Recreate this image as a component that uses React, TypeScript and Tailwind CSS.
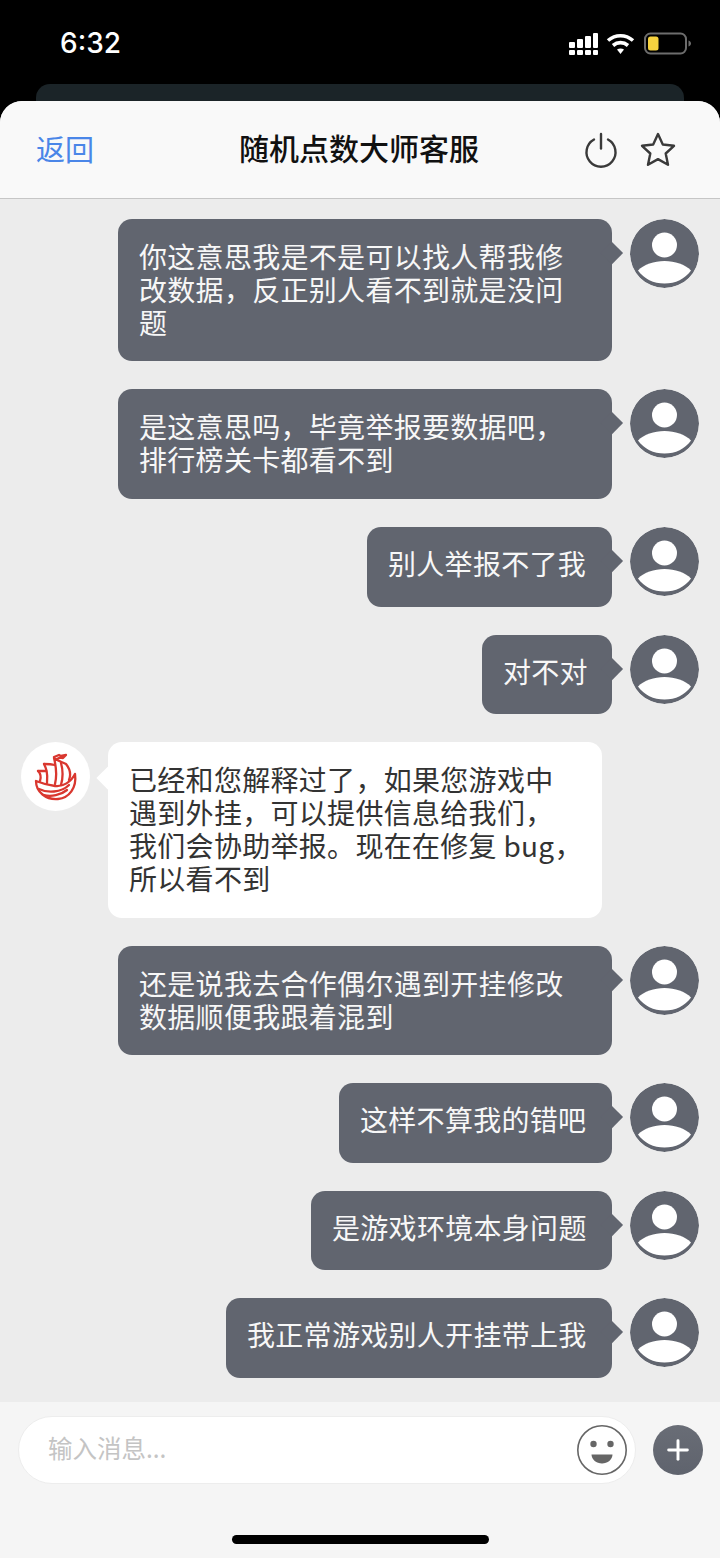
import React from "react";
import { Plus } from "lucide-react";

const FONT = "font-['Noto_Sans_CJK_SC','Noto_Sans',sans-serif]";

type Msg = { from: "me" | "staff"; text: string; box: string };

const messages: Msg[] = [
  { from: "me", box: "w-[494px] h-[142px]", text: "你这意思我是不是可以找人帮我修\n改数据\uFF0C反正别人看不到就是没问\n题" },
  { from: "me", box: "w-[494px] h-[110px]", text: "是这意思吗\uFF0C毕竟举报要数据吧\uFF0C\n排行榜关卡都看不到" },
  { from: "me", box: "w-[245px] h-[79.5px] pb-[4px]", text: "别人举报不了我" },
  { from: "me", box: "w-[130px] h-[79.5px] pb-[4px]", text: "对不对" },
  { from: "staff", box: "w-[494px] h-[176px]", text: "已经和您解释过了\uFF0C如果您游戏中\n遇到外挂\uFF0C可以提供信息给我们\uFF0C\n我们会协助举报。现在在修复 bug\uFF0C\n所以看不到" },
  { from: "me", box: "w-[494px] h-[109px]", text: "还是说我去合作偶尔遇到开挂修改\n数据顺便我跟着混到" },
  { from: "me", box: "w-[273px] h-[79.5px] pb-[4px]", text: "这样不算我的错吧" },
  { from: "me", box: "w-[301px] h-[79.5px] pb-[4px]", text: "是游戏环境本身问题" },
  { from: "me", box: "w-[386px] h-[79.5px] pb-[4px]", text: "我正常游戏别人开挂带上我" },
];

const StatusIcons = () => (
  <svg width="124" height="24" viewBox="0 0 124 24" fill="none">
    {/* signal */}
    <g fill="#fff">
      <rect x="2" y="18" width="6" height="5" rx="1" />
      <rect x="10" y="18" width="6" height="5" rx="1" />
      <rect x="18" y="18" width="6" height="5" rx="1" />
      <rect x="26" y="18" width="5" height="5" rx="1" />
      <rect x="2" y="10" width="6" height="6" rx="1" />
      <rect x="10" y="7" width="6" height="9" rx="1" />
      <rect x="18" y="4" width="6" height="12" rx="1" />
      <rect x="26" y="1" width="5" height="15" rx="1" />
    </g>
    {/* wifi */}
    <g fill="none" stroke="#fff" strokeWidth="3.6">
      <path d="M41 8.500c7.500-6.400 17.500-6.400 25 0" />
      <path d="M46 13.500c4.500-3.800 10.500-3.800 15 0" />
    </g>
    <path d="M50 17.600c2-1.500 5-1.500 7 0L53.500 22z" fill="#fff" />
    {/* battery */}
    <rect x="78" y="1.500" width="41" height="20" rx="5.500" stroke="#6d6d6d" strokeWidth="2" />
    <rect x="81" y="4.500" width="10.500" height="14" rx="2.500" fill="#f6d23f" />
    <path d="M121.500 8.500c1.600.6 2.500 1.600 2.500 3s-.9 2.400-2.500 3z" fill="#6d6d6d" />
  </svg>
);

const UserAvatar = () => (
  <div className="w-[69px] h-[69px] shrink-0 rounded-full overflow-hidden">
    <svg width="69" height="69" viewBox="0 0 69 69">
      <circle cx="34.500" cy="34.500" r="34.500" fill="#61656f" />
      <circle cx="34.500" cy="26" r="12.500" fill="#fff" />
      <path d="M8 51.500C14 45.500 24 42 34.500 42S55 45.500 61 51.500C55 60 45.500 64.500 34.500 64.500S14 60 8 51.500z" fill="#fff" />
    </svg>
  </div>
);

const StaffAvatar = () => (
  <div className="w-[69px] h-[69px] shrink-0 rounded-full bg-white flex items-center justify-center">
    <svg width="52" height="54" viewBox="0 0 52 54" fill="none" stroke="#d9372f" strokeWidth="2.300" strokeLinecap="round" strokeLinejoin="round" className="translate-x-[1px]">
      {/* hull */}
      <path d="M5 31c0 11 10 19 22 18 11-1 19-11 17-25-4 8-12 13-20 12-8-1-14-3-19-5z" />
      <path d="M8 39c8 4 22 4 30-4" />
      <path d="M13 45c7 2 17 0 23-5" />
      {/* sails */}
      <path d="M38 30c2-5 1-11-3-16-4-2-8-3-12-6 2 8 3 18 1 26" />
      <path d="M30 13c2 7 2 15 0 22" />
      <path d="M13 14c2 4 4 8 3 19" />
      <path d="M13 14c4 0 7 0 11 1" />
      <path d="M7 21c3 3 3 7 2 10" />
      <path d="M7 21h8" />
      {/* flag */}
      <path d="M23 7l5-2 2 1 5-1-3 3-3-.5-3 1.500" />
    </svg>
  </div>
);

const Bubble = ({ msg }: { msg: Msg }) => {
  const mine = msg.from === "me";
  return (
    <div className={`relative flex items-center rounded-[14px] pl-[21px] text-[28px] leading-[33px] tracking-[0.3px] whitespace-pre-line ${msg.box} ${mine ? "bg-[#61656f] text-[#f7f7f7]" : "bg-white text-[#333333]"}`}>
      <span className="block -translate-y-[1px]">{msg.text}</span>
      <span className={`absolute w-[15.5px] h-[15.5px] rotate-45 ${mine ? "top-[26px] -right-[7.75px] bg-[#61656f]" : "top-[28px] -left-[7.75px] bg-white"}`} />
    </div>
  );
};

const Row = ({ msg }: { msg: Msg }) =>
  msg.from === "me" ? (
    <div className="flex justify-end items-start gap-[18px] pr-[21px]">
      <Bubble msg={msg} />
      <UserAvatar />
    </div>
  ) : (
    <div className="flex items-start gap-[18px] pl-[21px]">
      <StaffAvatar />
      <Bubble msg={msg} />
    </div>
  );

export default function App() {
  return (
    <div lang="zh-CN" className={`w-[720px] h-[1558px] bg-black flex flex-col overflow-hidden ${FONT}`}>
      <div className="h-[84px] shrink-0 flex items-start justify-between pl-[60px] pr-[29px] pt-[25px]">
        <span className="text-white text-[28px] leading-[36px] font-medium font-['Inter',sans-serif]">6:32</span>
        <div className="pt-[7px]">
          <StatusIcons />
        </div>
      </div>
      <div className="h-[17px] shrink-0 mx-[36px] rounded-t-[14px] bg-[#1b2428]" />

      <div className="flex-1 min-h-0 flex flex-col rounded-t-[22px] overflow-hidden bg-[#ececec]">
        <header className="h-[98px] shrink-0 flex items-center justify-between pl-[36px] pr-[36px] bg-[#f9f9f9] border-b border-[#c6c6c6]">
          <span className="text-[#4a86e8] text-[29px] w-[100px] -translate-y-[1px]">返回</span>
          <span className="text-[#111111] text-[30px] font-medium -translate-x-[1px] -translate-y-[2px]">随机点数大师客服</span>
          <div className="w-[100px] flex items-center justify-end gap-[22px] pr-[8px]">
            <svg width="34" height="36" viewBox="0 0 34 36" fill="none" stroke="#3a3a3a" strokeWidth="2.400" strokeLinecap="round" className="shrink-0">
              <path d="M10 7.500a14.500 14.500 0 1 0 14 0" />
              <path d="M17 2v14.500" />
            </svg>
            <svg width="36" height="35" viewBox="0 0 36 35" fill="none" stroke="#3a3a3a" strokeWidth="2.400" strokeLinejoin="round" className="shrink-0">
              <path d="M18 2l4.800 10.500 11.200 1.300-8.300 7.700 2.300 11.300L18 27.100 8 32.800l2.300-11.300L2 13.800l11.200-1.300z" />
            </svg>
          </div>
        </header>

        <main className="flex-1 min-h-0 flex flex-col gap-[28px] pt-[20px]">
          {messages.map((m, i) => (
            <Row key={i} msg={m} />
          ))}
        </main>

        <footer className="h-[156px] shrink-0 bg-[#f5f5f5] relative flex flex-col">
          <div className="flex items-center gap-[17px] pl-[18px] pt-[14px]">
            <div className="w-[618px] h-[68px] rounded-full bg-white border border-[#ededed] flex items-center justify-between pl-[29px] pr-[8px]">
              <span className="text-[#c4c4c4] text-[24.5px] -translate-y-[2px]">输入消息...</span>
              <svg width="50" height="50" viewBox="0 0 50 50" fill="none">
                <circle cx="25" cy="25" r="24.200" stroke="#666" strokeWidth="1.600" />
                <circle cx="16.500" cy="19" r="3.200" fill="#666" />
                <circle cx="33.500" cy="19" r="3.200" fill="#666" />
                <path d="M14.500 29.500h21c0 5-5 9-10.500 9s-10.500-4-10.500-9z" fill="#666" />
              </svg>
            </div>
            <div className="w-[50px] h-[50px] rounded-full bg-gradient-to-b from-[#696d76] to-[#5f636d] flex items-center justify-center">
              <Plus size={32} color="#fff" strokeWidth={2.2} />
            </div>
          </div>
          <div className="mt-auto mb-[14px] mx-auto w-[257px] h-[9px] rounded-full bg-black" />
        </footer>
      </div>
    </div>
  );
}
